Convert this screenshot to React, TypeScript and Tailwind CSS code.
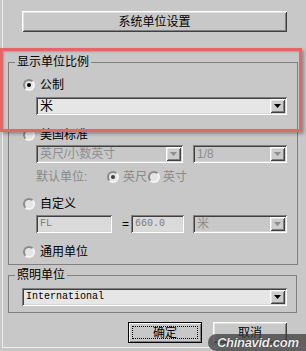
const raised =
  'shadow-[inset_1px_1px_0_#ffffff,inset_-1px_-1px_0_#404040,inset_2px_2px_0_#e2e2e2,inset_-2px_-2px_0_#808080]';
const sunken =
  'shadow-[inset_1px_1px_0_#808080,inset_-1px_-1px_0_#ffffff,inset_2px_2px_0_#404040,inset_-2px_-2px_0_#d6d6d6]';

function Radio({ checked, dim }: { checked?: boolean; dim?: boolean }) {
  return (
    <span className="flex h-[12px] w-[12px] shrink-0 items-center justify-center rounded-full border-2 border-t-[#8a8a8a] border-l-[#8a8a8a] border-r-[#f4f4f4] border-b-[#f4f4f4] bg-[#e4e4e4]">
      {checked && (
        <span className={dim ? 'h-[4px] w-[4px] rounded-full bg-[#404040]' : 'h-[4px] w-[4px] rounded-full bg-black'} />
      )}
    </span>
  );
}

function Combo({ text, disabled, mono, className }: { text: string; disabled?: boolean; mono?: boolean; className?: string }) {
  return (
    <div
      className={`flex h-[18px] items-center ${sunken} ${disabled ? 'bg-[#c8c8c8] text-[#8e8e8e]' : 'bg-[#e6e6e6] text-black'} ${className ?? ''}`}
    >
      <span className={`flex-1 pl-[4px] ${mono ? "font-['Liberation_Mono',monospace] text-[10px]" : ''}`}>{text}</span>
      <span className={`mr-[2px] flex h-[14px] w-[15px] items-center justify-center bg-[#cccccc] ${raised}`}>
        <svg width="7" height="4" viewBox="0 0 7 4">
          <path d="M0 0h7L3.5 4z" fill={disabled ? '#8e8e8e' : '#000'} />
        </svg>
      </span>
    </div>
  );
}

function Field({ text, className }: { text: string; className?: string }) {
  return (
    <div className={`flex h-[18px] items-center bg-[#dadada] pl-[4px] font-['Liberation_Mono',monospace] text-[10px] text-[#7a7a7a] ${sunken} ${className ?? ''}`}>
      {text}
    </div>
  );
}

function App() {
  return (
    <div className="relative h-[351px] w-[306px] overflow-hidden bg-[#c8c8c8] font-['Liberation_Sans','Noto_Sans_CJK_SC',sans-serif] text-[12px] leading-[14px] text-black">
      <div className="ml-[2px] flex h-[348px] flex-col border-b border-l border-[#ececec] pt-[11px]">
        <button className={`ml-[19px] flex h-[21px] w-[265px] items-center justify-center bg-[#c8c8c8] ${raised}`}>
          系统单位设置
        </button>

        <fieldset className="ml-[5px] mt-[23px] w-[290px] border border-[#808080] px-0 pb-[5px]">
          <legend className="ml-[6px] px-[2px]">显示单位比例</legend>
          <div className="flex flex-col">
            <div className="ml-[14px] mt-[9px] flex h-[14px] items-center gap-[5px]">
              <Radio checked />
              <span>公制</span>
            </div>
            <Combo text="米" className="ml-[27px] mt-[5px] w-[251px] text-[13px]" />

            <div className="ml-[14px] mt-[13px] flex h-[14px] items-center gap-[5px]">
              <Radio />
              <span>美国标准</span>
            </div>
            <div className="ml-[27px] mt-[3px] flex gap-[10px]">
              <Combo text="英尺/小数英寸" disabled className="w-[147px]" />
              <Combo text="1/8" disabled className="w-[94px]" />
            </div>
            <div className="ml-[27px] mt-[7px] flex h-[14px] items-center text-[#8a8a8a]">
              <span className="w-[71px]">默认单位:</span>
              <Radio checked dim />
              <span className="ml-[4px] w-[25px]">英尺</span>
              <Radio />
              <span className="ml-[3px]">英寸</span>
            </div>

            <div className="ml-[14px] mt-[13px] flex h-[14px] items-center gap-[5px]">
              <Radio />
              <span>自定义</span>
            </div>
            <div className="ml-[27px] mt-[4px] flex items-center">
              <Field text="FL" className="w-[76px]" />
              <span className="ml-[10px] w-[9px]">=</span>
              <Field text="660.0" className="w-[53px]" />
              <Combo text="米" disabled className="ml-[9px] w-[94px]" />
            </div>

            <div className="ml-[14px] mt-[12px] flex h-[14px] items-center gap-[5px]">
              <Radio />
              <span>通用单位</span>
            </div>
          </div>
        </fieldset>

        <fieldset className="ml-[5px] mt-[3px] w-[289px] border border-[#808080] px-0 pb-[6px]">
          <legend className="ml-[6px] px-[2px]">照明单位</legend>
          <Combo text="International" mono className="ml-[13px] mt-[6px] w-[265px]" />
        </fieldset>

        <div className="mt-[9px] flex justify-end gap-[11px] pr-[19px]">
          <button className="flex h-[21px] w-[74px] items-center justify-center border border-black bg-[#c8c8c8] p-[3px] shadow-[inset_1px_1px_0_#ffffff,inset_-1px_-1px_0_#808080]">
            <span className="flex h-full w-full items-center justify-center border border-dotted border-black">确定</span>
          </button>
          <button className={`flex h-[21px] w-[74px] items-center justify-center bg-[#c8c8c8] ${raised}`}>取消</button>
        </div>
      </div>

      {/* highlight box drawn over the screenshot */}
      <div className="pointer-events-none absolute left-0 top-[48px] h-[84px] w-[302px] border-[3px] border-[#e26868] shadow-[2px_2px_3px_rgba(0,0,0,0.3),inset_1px_1px_2px_rgba(0,0,0,0.2)]" />

      {/* watermark */}
      <div className="absolute left-[208px] top-[334px] flex h-[17px] w-[98px] items-center rounded-l-full bg-[#3c3c3c]/75 pl-[9px]">
        <span className="font-['Liberation_Sans',sans-serif] text-[13px] font-bold italic leading-none tracking-[-0.3px] text-[#eeeeee] [text-shadow:0_0_1px_#000]">
          Chinavid.com
        </span>
      </div>
    </div>
  );
}

export default App;
